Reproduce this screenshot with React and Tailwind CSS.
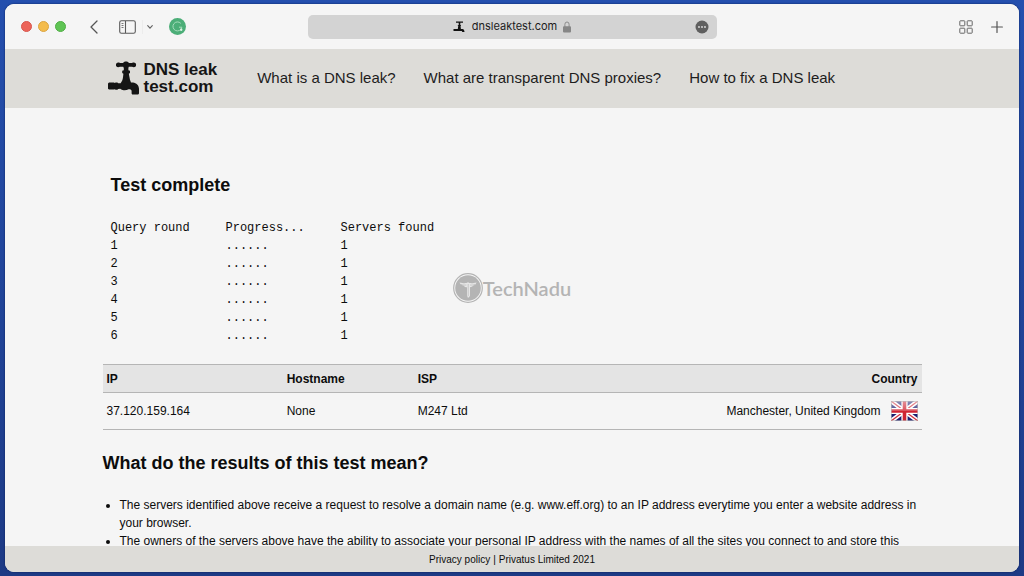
const rounds = [1, 2, 3, 4, 5, 6];

const navLinks = [
  'What is a DNS leak?',
  'What are transparent DNS proxies?',
  'How to fix a DNS leak',
];

const servers = [
  { ip: '37.120.159.164', hostname: 'None', isp: 'M247 Ltd', country: 'Manchester, United Kingdom' },
];

const Tap = ({ className }) => (
  <svg viewBox="0 0 32 34" className={className} fill="currentColor" aria-hidden="true">
    <path d="M8.5 2.2c1-.9 2.200-.8 3.500-.2h3.200c.3-1 1.200-1.500 2.800-1.500s2.500.5 2.800 1.500H24c1.300-.6 2.500-.7 3.600.2.700.8.700 2.600 0 3.400-1.100.9-2.300.8-3.600.2h-3.200l-.4 1.200v2.200l1.600.6v2.200l-1.200.8.600 3c.2 2 .8 4 1.600 5.800H25c3.400.4 5.800 2.600 6 6.200v4.600l-.8 1h-6l-.6-1v-2.600c-.4-1.200-1.400-1.600-3-1.600-1.400.8-3 1.200-5 1-1.200 0-2.400-.6-3.400-1.400l-2 .2-.8.8H7.600l-.8-.6-.8.400H1l-1-.8v-5.400l1-.8h5l.8.4.8-.6H9.400l.8.8h2.400c1.400-1.800 2.200-3.800 2.400-6l.4-3.400-1.200-.8v-2.200l1.600-.6V7l-.6-1.200H12c-1.300.6-2.500.7-3.500-.2-.7-.8-.7-2.600 0-3.400z" />
  </svg>
);

const SmallTap = () => (
  <svg viewBox="0 0 12 12" className="h-3 w-3" fill="#111" aria-hidden="true">
    <path d="M3 .5h7v1.200H7.300V4H8v.8h-.5l.4 3.200h1.600c1.300.2 2 1.400 2 3h-2.200l-.5-1H.5V8h4.300l.5-3.200h-.5V4h.9V1.700H3z" />
  </svg>
);

const Flag = () => (
  <svg viewBox="0 0 27 20" className="h-5 w-[27px]" role="img" aria-label="United Kingdom">
    <defs>
      <linearGradient id="gloss" x1="0" y1="0" x2="0" y2="1">
        <stop offset="0" stopColor="#fff" stopOpacity="0.5" />
        <stop offset="0.5" stopColor="#fff" stopOpacity="0.2" />
        <stop offset="0.51" stopColor="#fff" stopOpacity="0" />
      </linearGradient>
    </defs>
    <rect width="27" height="20" fill="#1b1d70" />
    <path d="M0 0l27 20M27 0L0 20" stroke="#fff" strokeWidth="4.400" />
    <path d="M0 0l13.500 10M27 0L13.500 10M0 20l13.500-10M27 20L13.500 10" stroke="#d3323f" strokeWidth="1.300" />
    <path d="M13.500 0v20M0 10h27" stroke="#fff" strokeWidth="6.200" />
    <path d="M13.500 0v20M0 10h27" stroke="#cf2433" strokeWidth="3.600" />
    <rect width="27" height="20" fill="url(#gloss)" />
    <rect x=".5" y=".5" width="26" height="19" fill="none" stroke="#bbb" strokeOpacity=".6" />
  </svg>
);

const Toolbar = () => (
  <div className="grid h-[45px] shrink-0 grid-cols-[1fr_2fr_1fr] items-center bg-[#f5f5f5] px-4">
    <div className="flex items-center">
      <div className="flex gap-1.5">
        <button type="button" aria-label="Close" className="h-[11px] w-[11px] rounded-full border border-[#d8564d] bg-[#ec6459]" />
        <button type="button" aria-label="Minimize" className="h-[11px] w-[11px] rounded-full border border-[#dba541] bg-[#f4bc4c]" />
        <button type="button" aria-label="Zoom" className="h-[11px] w-[11px] rounded-full border border-[#4fae44] bg-[#5fc454]" />
      </div>
      <button type="button" aria-label="Back" className="ml-6">
        <svg viewBox="0 0 8 14" className="h-3.5 w-2" fill="none" stroke="#555" strokeWidth="1.300" strokeLinecap="round" strokeLinejoin="round">
          <path d="M7 1L1 7l6 6" />
        </svg>
      </button>
      <button type="button" aria-label="Sidebar" className="ml-[21px] border-r border-[#ececec] pr-1.5">
        <svg viewBox="0 0 17 14" className="h-3.5 w-[17px]" fill="none" stroke="#5a5a5a" strokeWidth="1.100">
          <rect x=".7" y=".7" width="15.600" height="12.600" rx="1.800" />
          <path d="M6.500 1v12" />
          <path d="M2.500 3.500h2M2.500 5.500h2M2.500 7.500h2" strokeWidth=".8" />
        </svg>
      </button>
      <button type="button" aria-label="Tab groups" className="ml-1">
        <svg viewBox="0 0 6 4" className="h-1 w-1.5" fill="none" stroke="#666" strokeWidth="1.100" strokeLinecap="round">
          <path d="M.7.700L3 3.200 5.300.7" />
        </svg>
      </button>
      <button type="button" aria-label="Grammar" className="ml-4">
        <svg viewBox="0 0 17 17" className="h-[17px] w-[17px]" fill="none">
          <circle cx="8.500" cy="8.500" r="8.500" fill="#4cae78" />
          <path d="M11.800 5.400A4.500 4.500 0 1 0 12.900 9.200H10" stroke="#a5dcbb" strokeWidth="1" />
          <circle cx="12.200" cy="11.800" r="1.200" fill="#d9f3e3" />
        </svg>
      </button>
    </div>

    <div className="mx-auto grid h-6 w-[409px] max-w-full grid-cols-[1fr_auto_1fr] items-center rounded-[5px] bg-[#d3d3d3] px-2">
      <span />
      <div className="flex items-center gap-[7px] font-['Inter',sans-serif] text-[11px] text-[#1c1c1c]">
        <SmallTap />
        <span>dnsleaktest.com</span>
        <svg viewBox="0 0 8 12" className="-ml-px h-3 w-2" fill="none" aria-hidden="true">
          <path d="M1.900 6V3.300a2.100 2.300 0 0 1 4.200 0V6" stroke="#8b8b8b" strokeWidth="1" />
          <rect y="5.200" width="8" height="6.200" rx="1" fill="#868686" />
        </svg>
      </div>
      <button type="button" aria-label="Page menu" className="justify-self-end">
        <svg viewBox="0 0 14 14" className="h-3.5 w-3.5">
          <circle cx="7" cy="7" r="6.500" fill="#5f5f5f" />
          <circle cx="4" cy="7" r=".9" fill="#e2e2e2" />
          <circle cx="7" cy="7" r=".9" fill="#e2e2e2" />
          <circle cx="10" cy="7" r=".9" fill="#e2e2e2" />
        </svg>
      </button>
    </div>

    <div className="flex items-center justify-end gap-[18px]">
      <button type="button" aria-label="Tab overview">
        <svg viewBox="0 0 14 14" className="h-3.5 w-3.5" fill="none" stroke="#666" strokeWidth="1">
          <rect x=".8" y=".8" width="5" height="5" rx=".6" />
          <rect x="8.200" y=".8" width="5" height="5" rx=".6" />
          <rect x=".8" y="8.200" width="5" height="5" rx=".6" />
          <rect x="8.200" y="8.200" width="5" height="5" rx=".6" />
        </svg>
      </button>
      <button type="button" aria-label="New tab">
        <svg viewBox="0 0 12 12" className="h-3 w-3" stroke="#555" strokeWidth="1.200" strokeLinecap="round">
          <path d="M6 .6v10.800M.6 6h10.800" />
        </svg>
      </button>
    </div>
  </div>
);

const Header = () => (
  <header className="shrink-0 bg-[#dddcd8]">
    <div className="mx-auto flex h-[59px] max-w-[819px] items-center px-[5px]">
      <a href="#home" className="flex items-center gap-1 pb-0.5 text-[#151515]">
        <Tap className="h-[34px] w-8" />
        <span className="text-[17px] leading-[17px] font-bold">
          DNS leak
          <br />
          test.com
        </span>
      </a>
      <nav className="ml-10 flex gap-7 text-[15px] text-[#1d1d1d]">
        {navLinks.map((label) => (
          <a key={label} href="#help">{label}</a>
        ))}
      </nav>
    </div>
  </header>
);

const Progress = () => (
  <table className="mt-[22px] ml-2 table-fixed text-left font-['Liberation_Mono',monospace] text-xs leading-[18px]">
    <thead>
      <tr>
        <th className="w-[115px] font-normal">Query round</th>
        <th className="w-[115px] font-normal">Progress...</th>
        <th className="w-[115px] font-normal">Servers found</th>
      </tr>
    </thead>
    <tbody>
      {rounds.map((n) => (
        <tr key={n}>
          <td>{n}</td>
          <td>......</td>
          <td>1</td>
        </tr>
      ))}
    </tbody>
  </table>
);

const Results = () => (
  <table className="mt-[19px] w-full text-left text-xs">
    <thead className="border-y border-[#b5b5b5] bg-[#e4e4e4]">
      <tr className="h-7">
        <th className="w-[22%] px-1">IP</th>
        <th className="w-[16%] px-1">Hostname</th>
        <th className="px-1">ISP</th>
        <th className="px-1 text-right">Country</th>
      </tr>
    </thead>
    <tbody>
      {servers.map((s) => (
        <tr key={s.ip} className="h-[37px] border-b border-[#b5b5b5]">
          <td className="px-1">{s.ip}</td>
          <td className="px-1">{s.hostname}</td>
          <td className="px-1">{s.isp}</td>
          <td className="px-1">
            <div className="flex items-center justify-end gap-2.5">
              {s.country}
              <Flag />
            </div>
          </td>
        </tr>
      ))}
    </tbody>
  </table>
);

const Watermark = () => (
  <div className="pointer-events-none absolute inset-0 flex items-center justify-center text-[#b4b4b4]">
    <svg viewBox="0 0 30 30" className="h-[30px] w-[30px]" aria-hidden="true">
      <circle cx="15" cy="15" r="14.300" fill="none" stroke="currentColor" strokeWidth="1.200" />
      <circle cx="15" cy="15" r="12.800" fill="currentColor" />
      <path d="M6.500 9.500c3 .8 5 .8 7 .6l1.500-.8 1.500.8c2 .2 4 .2 7-.6-.6 1.800-2 2.900-3.600 3.300-.8 1-1.600 1.400-2.900 1.500V23L15 25l-1-2.500v-8.200c-1.500 0-2.400-.5-3.200-1.500-1.800-.4-3.500-1.500-4.300-3.300z" fill="#e6e6e6" />
      <path d="M15.200 11v12M8 11.300c2 .8 3.500.9 5.400.7M22 11.300c-2 .8-3.500.9-5 .7" stroke="#b4b4b4" strokeWidth=".6" fill="none" />
    </svg>
    <span className="font-['Lato',sans-serif] text-[20px] font-semibold">TechNadu</span>
  </div>
);

const App = () => {
  return (
    <div className="h-screen bg-[#21469f] bg-linear-to-b from-[#244fae] to-[#1d3a85] px-[5px] py-1 font-['Liberation_Sans',sans-serif] text-[#0c0c0c]">
      <div className="relative flex h-full flex-col overflow-hidden rounded-[9px] bg-[#f5f5f5] shadow-[0_0_2px_#0a1c50]">
        <Toolbar />
        <Header />
        <main className="min-h-0 flex-1 overflow-hidden">
          <div className="mx-auto max-w-[819px] pt-[65px]">
            <h1 className="ml-2 text-lg leading-6 font-bold">Test complete</h1>
            <Progress />
            <Results />
            <h2 className="mt-[21px] text-lg leading-6 font-bold">What do the results of this test mean?</h2>
            <ul className="mt-[21px] list-disc pl-[17px] text-xs leading-[18px]">
              <li>
                The servers identified above receive a request to resolve a domain name (e.g. www.eff.org) to an IP
                address everytime you enter a website address in your browser.
              </li>
              <li>
                The owners of the servers above have the ability to associate your personal IP address with the names of
                all the sites you connect to and store this
              </li>
            </ul>
          </div>
        </main>
        <footer className="flex h-[26px] shrink-0 items-center justify-center gap-[3px] bg-[#dddcd8] text-[10px]">
          <a href="#privacy">Privacy policy</a>
          <span>|</span>
          <span>Privatus Limited 2021</span>
        </footer>
        <Watermark />
      </div>
    </div>
  );
};

export default App;
